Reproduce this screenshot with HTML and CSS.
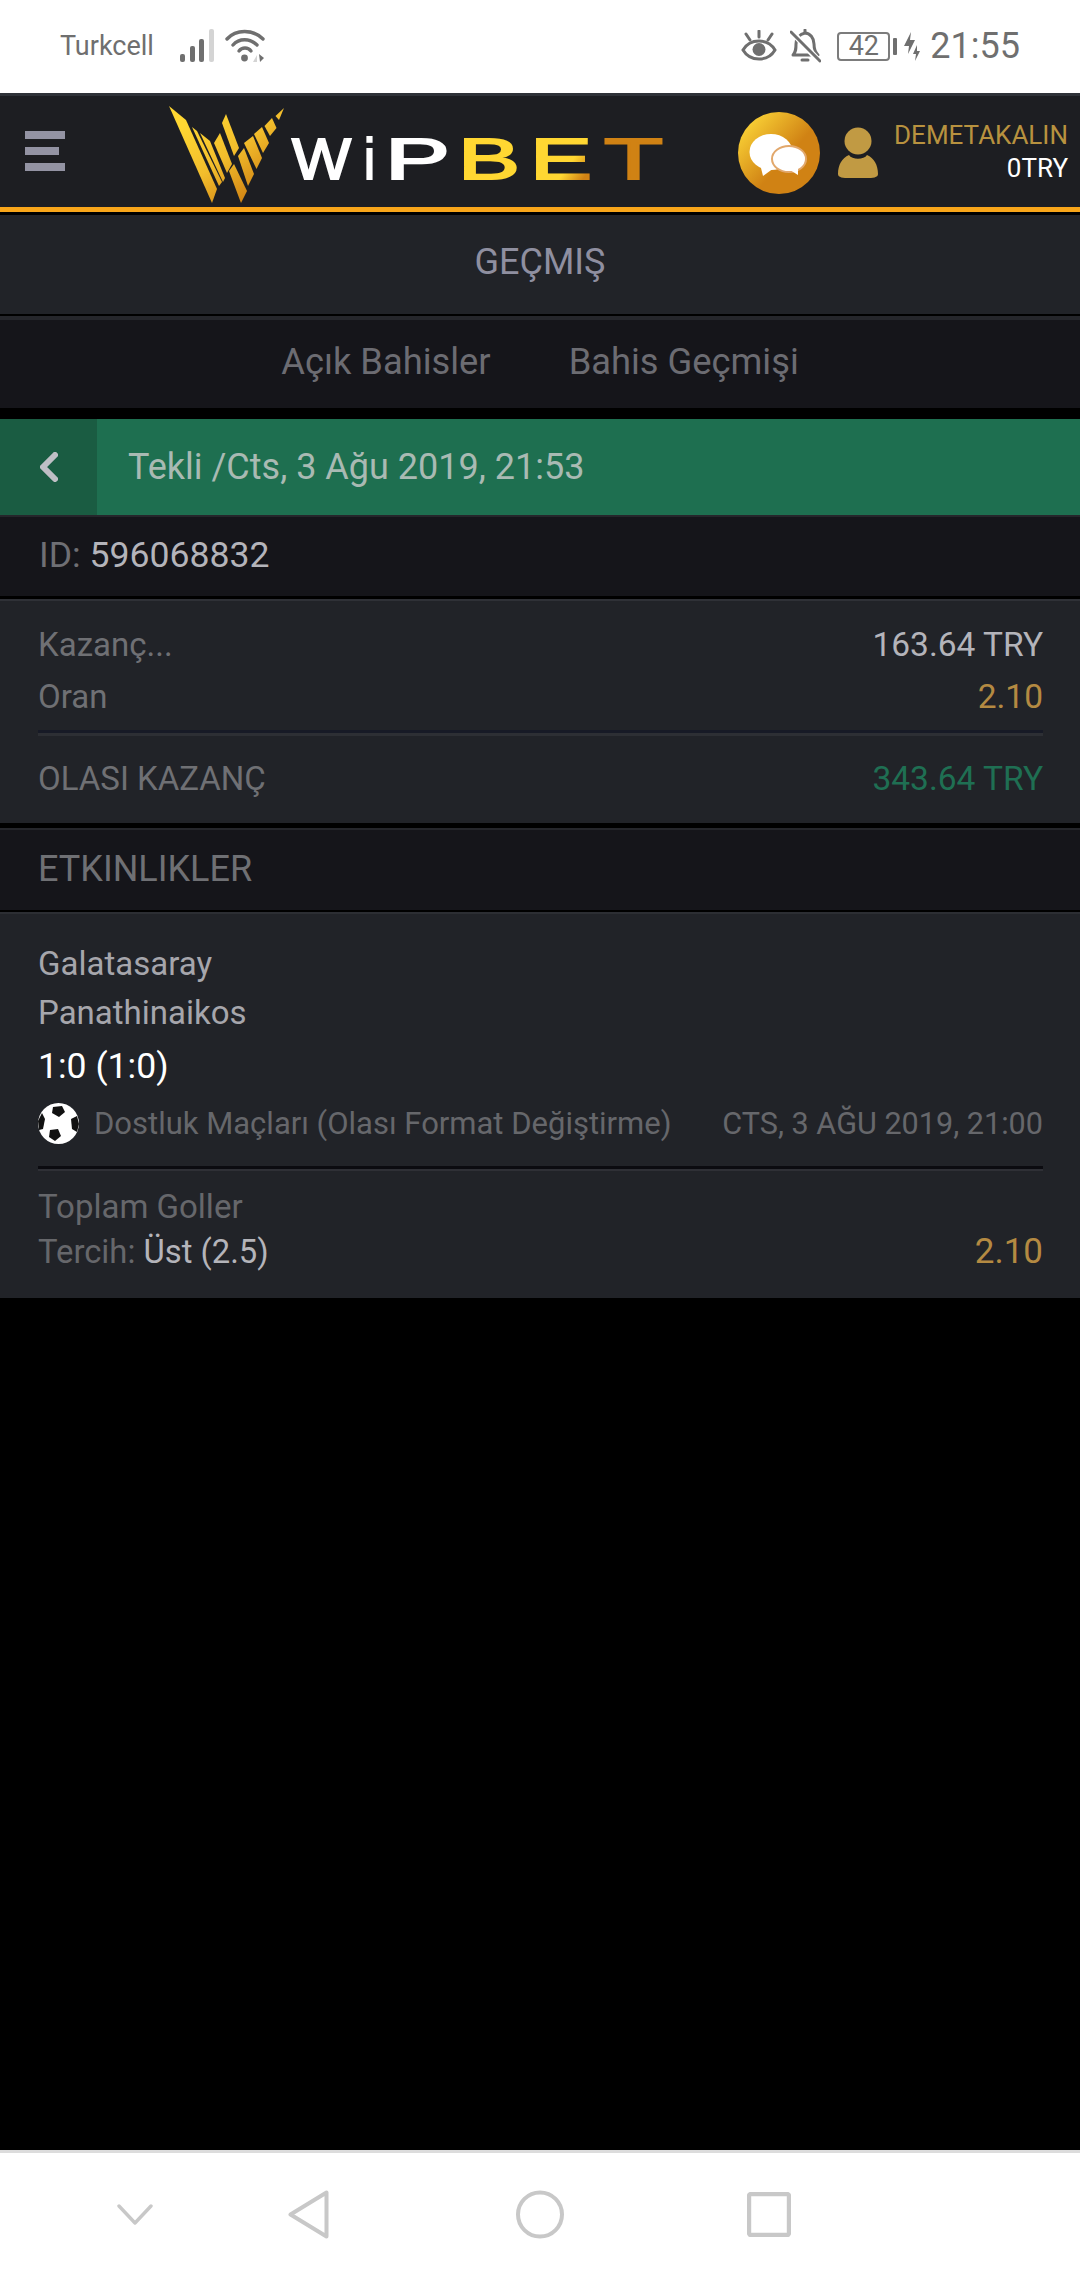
FILE: index.html
```html
<!DOCTYPE html>
<html lang="tr">
  <head>
    <meta charset="UTF-8" />
    <meta name="viewport" content="width=device-width, initial-scale=1.0" />
    <title>Geçmiş</title>
    <link rel="stylesheet" href="styles.css">
  </head>
  <body>
    <div class="phone">
      <div class="status-bar">
        <span class="carrier">Turkcell</span>
        <svg class="signal-icon" width="35" height="34" viewBox="0 0 35 34">
          <rect x="0" y="25" width="5" height="8" rx="2" fill="#6f6f6f" />
          <rect x="10" y="17" width="5" height="16" rx="2" fill="#6f6f6f" />
          <rect x="19" y="10" width="5" height="23" rx="2" fill="#6f6f6f" />
          <rect x="29" y="0" width="5" height="33" rx="2" fill="#d4d4d4" />
        </svg>
        <svg class="wifi-icon" width="40" height="34" viewBox="0 0 40 34">
          <path d="M2 10 C11 0 28 0 38 10" fill="none" stroke="#6f6f6f" stroke-width="3.4" stroke-linecap="round" />
          <path d="M8 16 C14 9 25 9 32 16" fill="none" stroke="#6f6f6f" stroke-width="3.4" stroke-linecap="round" />
          <path d="M14 22 C17 18 23 18 26 22" fill="none" stroke="#6f6f6f" stroke-width="3.4" stroke-linecap="round" />
          <circle cx="19.5" cy="29" r="3.4" fill="#6f6f6f" />
          <path d="M28 33 L32 26 L32 33 Z" fill="#d4d4d4" />
          <path d="M34 25 L39 29 L35 33 Z" fill="#6f6f6f" />
        </svg>
        <div class="status-right">
          <svg class="eye-icon" width="36" height="32" viewBox="0 0 36 32">
            <path d="M2 20 C9 8 27 8 34 20 C27 32 9 32 2 20 Z" fill="none" stroke="#6f6f6f" stroke-width="3" />
            <circle cx="18" cy="19.5" r="6.5" fill="#6f6f6f" />
            <path d="M18 1 V7 M5 4 L9 10 M31 4 L27 10" fill="none" stroke="#6f6f6f" stroke-width="3" stroke-linecap="round" />
          </svg>
          <svg class="bell-icon" width="31" height="34" viewBox="0 0 31 34">
            <path d="M3 26 C6 23 6 20 6 15 C6 9 10 5 15 4 C20 4 24 9 24 15 C24 20 25 23 28 26 Z" fill="none" stroke="#6f6f6f" stroke-width="3" stroke-linejoin="round" />
            <path d="M12 31 H18 M15 1 V3" stroke="#6f6f6f" stroke-width="3" stroke-linecap="round" />
            <path d="M1 2 L30 33" stroke="#fff" stroke-width="6" />
            <path d="M1 3 L30 32" stroke="#6f6f6f" stroke-width="3" stroke-linecap="round" />
          </svg>
          <span class="battery">42</span>
          <span class="battery-tip"></span>
          <svg class="charge-icon" width="17" height="29" viewBox="0 0 17 29">
            <path d="M7 0 L0 14 H5 L4 22 L11 8 H6 Z M13 13 L9 22 H12 L11 29 L16 19 H13 Z" fill="#6f6f6f" />
          </svg>
          <span class="clock">21:55</span>
        </div>
      </div>

      <header class="top-bar">
        <div class="menu-button">
          <span class="menu-line"></span>
          <span class="menu-line short"></span>
          <span class="menu-line"></span>
        </div>
        <svg class="logo" width="500" height="100" viewBox="165 103 500 100">
          <defs>
            <linearGradient id="markGold" gradientUnits="userSpaceOnUse" x1="190" y1="120" x2="250" y2="200">
              <stop offset="0" stop-color="#ffd732" />
              <stop offset="0.5" stop-color="#f2bd2c" />
              <stop offset="1" stop-color="#cf8112" />
            </linearGradient>
            <linearGradient id="etGold" gradientUnits="userSpaceOnUse" x1="545" y1="145" x2="590" y2="178">
              <stop offset="0" stop-color="#ffd732" />
              <stop offset="0.55" stop-color="#ffd732" />
              <stop offset="0.9" stop-color="#d08214" />
            </linearGradient>
          </defs>
          <g fill="url(#markGold)">
            <polygon points="169,105 186,119 217,188 212,202" />
            <polygon points="192,126 197,130 222,181 219,185" />
            <polygon points="200,132 210,140 225,177 223,181" />
            <polygon points="214,142 220,132 232,163 227,172" />
            <polygon points="222,122 226,113 239,147 234,155" />
            <polygon points="229,170 234,163 247,190 241,202" />
            <polygon points="238,155 244,147 254,173 248,185" />
            <polygon points="244,142 253,135 262,157 256.5,168" />
            <polygon points="254,133 262,126 269,142 263,152" />
            <polygon points="264.5,125 272,117 276.5,127 270,135" />
            <polygon points="275.5,115 284,107 279,119" />
          </g>
          <g class="logo-text">
            <text x="292" y="178" textLength="59" lengthAdjust="spacingAndGlyphs" fill="#fff" stroke="#fff">W</text>
            <text x="364" y="178" textLength="11" lengthAdjust="spacingAndGlyphs" fill="#fff" stroke="#fff">i</text>
            <text x="385" y="178" textLength="65" lengthAdjust="spacingAndGlyphs" fill="#fff" stroke="#fff">P</text>
            <text x="458" y="178" textLength="62" lengthAdjust="spacingAndGlyphs" fill="#ffd732" stroke="#ffd732">B</text>
            <text x="530" y="178" textLength="62" lengthAdjust="spacingAndGlyphs" fill="url(#etGold)" stroke="url(#etGold)">E</text>
            <text x="604" y="178" textLength="59" lengthAdjust="spacingAndGlyphs" fill="#d08214" stroke="#d08214">T</text>
          </g>
        </svg>
        <svg class="chat-icon" width="82" height="82" viewBox="0 0 82 82">
          <defs>
            <linearGradient id="chatGold" x1="0.05" y1="0.05" x2="0.6" y2="0.55">
              <stop offset="0" stop-color="#ffdc3a" />
              <stop offset="1" stop-color="#d08214" />
            </linearGradient>
          </defs>
          <circle cx="41" cy="41" r="41" fill="url(#chatGold)" />
          <ellipse cx="33" cy="40" rx="21.5" ry="18" fill="#fff" />
          <path d="M22 52 L25 64 L36 56 Z" fill="#fff" />
          <ellipse cx="51" cy="47" rx="17" ry="13" fill="#fff" stroke="#e2a86c" stroke-width="2" />
          <path d="M52 58 L60 63 L60 55 Z" fill="#fff" />
        </svg>
        <svg class="person-icon" width="40" height="52" viewBox="0 0 40 52">
          <circle cx="20" cy="14" r="13.5" fill="#c19a43" />
          <path d="M0 47 C0 38 4 31 11 28 C14 33 26 33 29 28 C36 31 40 38 40 47 C40 52 30 51 20 51 C10 51 0 52 0 47 Z" fill="#c19a43" />
        </svg>
        <div class="user-info">
          <span class="user-name">DEMETAKALIN</span>
          <span class="user-balance">0TRY</span>
        </div>
      </header>
      <div class="accent-line"></div>

      <div class="page-title">GEÇMIŞ</div>

      <nav class="tabs">
        <span>Açık Bahisler</span>
        <span>Bahis Geçmişi</span>
      </nav>

      <div class="bet-bar">
        <span class="back-button">
          <svg width="18" height="30" viewBox="0 0 18 30">
            <path d="M15 3 L3 15 L15 27" fill="none" stroke="#bfbfc5" stroke-width="6" stroke-linecap="round" stroke-linejoin="round" />
          </svg>
        </span>
        <span class="bet-title">Tekli /Cts, 3 Ağu 2019, 21:53</span>
      </div>

      <div class="bet-id">ID: <span class="bet-id-value">596068832</span></div>

      <section class="summary">
        <div class="summary-row">
          <span class="label">Kazanç...</span>
          <span class="value">163.64 TRY</span>
        </div>
        <div class="summary-row">
          <span class="label">Oran</span>
          <span class="value gold">2.10</span>
        </div>
        <div class="divider"></div>
        <div class="summary-row">
          <span class="label">OLASI KAZANÇ</span>
          <span class="value green">343.64 TRY</span>
        </div>
      </section>

      <div class="section-title">ETKINLIKLER</div>

      <section class="event">
        <div class="team">Galatasaray</div>
        <div class="team">Panathinaikos</div>
        <div class="score">1:0 (1:0)</div>
        <div class="league-row">
          <svg class="ball-icon" width="41" height="41" viewBox="0 0 41 41">
            <circle cx="20.5" cy="20.5" r="20.5" fill="#fff" />
            <polygon points="15,4 24,3 27,9 21,14 14,10" fill="#111" />
            <polygon points="0,18 4,10 7,16 5,26 1,27" fill="#111" />
            <polygon points="12,27 20,26 23,33 17,38 11,34" fill="#111" />
            <polygon points="33,16 39,13 41,21 39,29 34,26" fill="#111" />
          </svg>
          <span class="league">Dostluk Maçları (Olası Format Değiştirme)</span>
          <span class="event-date">CTS, 3 AĞU 2019, 21:00</span>
        </div>
        <div class="divider event-divider"></div>
        <div class="market">Toplam Goller</div>
        <div class="pick-row">
          <span class="pick">Tercih: <span class="pick-value">Üst (2.5)</span></span>
          <span class="pick-odds">2.10</span>
        </div>
      </section>

      <div class="spacer"></div>

      <div class="nav-bar">
        <svg class="nav-hide" width="36" height="21" viewBox="0 0 36 21">
          <path d="M2 2 L18 19 L34 2" fill="none" stroke="#c8c8c8" stroke-width="3.4" stroke-linecap="round" stroke-linejoin="round" />
        </svg>
        <svg class="nav-back" width="41" height="49" viewBox="0 0 41 49">
          <path d="M38.5 2.5 V46.5 L2.5 24.5 Z" fill="none" stroke="#c8c8c8" stroke-width="4" stroke-linejoin="round" />
        </svg>
        <svg class="nav-home" width="48" height="49" viewBox="0 0 48 49">
          <circle cx="24" cy="24.5" r="22" fill="none" stroke="#c8c8c8" stroke-width="4" />
        </svg>
        <svg class="nav-recent" width="44" height="45" viewBox="0 0 44 45">
          <rect x="2" y="2" width="40" height="41" rx="2" fill="none" stroke="#c8c8c8" stroke-width="4.4" />
        </svg>
      </div>
    </div>
  </body>
</html>
```

FILE: styles.css
```css
* {
  box-sizing: border-box;
  margin: 0;
  padding: 0;
}

body {
  background: #000;
  font-family: Roboto, sans-serif;
}

.phone {
  display: flex;
  flex-direction: column;
  height: 2280px;
}

/* status bar */
.status-bar {
  display: flex;
  align-items: center;
  height: 93px;
  padding-left: 60px;
  padding-bottom: 1px;
  background: #fff;
  color: #6f6f6f;
}

.carrier {
  font-size: 27px;
}

.signal-icon {
  margin-left: 26px;
}

.wifi-icon {
  margin-left: 10px;
}

.status-right {
  display: flex;
  align-items: center;
  margin-left: auto;
  padding-right: 60px;
}

.eye-icon {
  margin-right: 13px;
}

.bell-icon {
  margin-right: 16px;
}

.battery {
  width: 53px;
  height: 29px;
  border: 2px solid #7c7c7c;
  border-radius: 4px;
  font-size: 27px;
  line-height: 25px;
  text-align: center;
}

.battery-tip {
  width: 4px;
  height: 17px;
  margin: 0 7px 0 3px;
  background: #6f6f6f;
  border-radius: 1px;
}

.charge-icon {
  margin-right: 9px;
}

.clock {
  font-size: 36px;
}

/* header */
.top-bar {
  display: flex;
  align-items: center;
  height: 114px;
  padding-left: 25px;
  padding-right: 12px;
  background: #1d1e22;
  border-top: 3px solid #2f3238;
}

.menu-button {
  display: flex;
  flex-direction: column;
  gap: 8px;
  width: 40px;
  margin-top: -2px;
}

.menu-line {
  height: 8px;
  background: #9393a3;
}

.menu-line.short {
  width: 34px;
}

.logo {
  margin-left: 100px;
  margin-top: 4px;
}

.logo-text text {
  font-family: "Liberation Sans", sans-serif;
  font-size: 58px;
  stroke-width: 2;
}

.chat-icon {
  margin-left: 73px;
  margin-top: 2px;
}

.person-icon {
  margin-left: 18px;
  margin-top: 2px;
}

.user-info {
  display: flex;
  flex-direction: column;
  align-items: flex-end;
  margin-left: auto;
  font-size: 26px;
  line-height: 33px;
}

.user-name {
  color: #b8923f;
}

.user-balance {
  color: #fff;
}

.accent-line {
  height: 5px;
  background: #f9a61a;
  margin-bottom: 3px;
}

/* title and tabs */
.page-title {
  height: 99px;
  background: #212328;
  color: #8f8fa0;
  font-size: 36px;
  line-height: 95px;
  text-align: center;
}

.tabs {
  display: flex;
  justify-content: center;
  gap: 78px;
  height: 92px;
  margin-top: 2px;
  background: #15151a;
  border-top: 4px solid #25262b;
  color: #6c6c72;
  font-size: 36.3px;
  line-height: 84px;
}

/* bet header */
.bet-bar {
  display: flex;
  height: 96px;
  margin-top: 11px;
  background: #1e6f50;
  color: #a9bab3;
  font-size: 36px;
  line-height: 96px;
}

.back-button {
  display: flex;
  align-items: center;
  justify-content: center;
  width: 97px;
  background: #1a5c42;
}

.bet-title {
  margin-left: 31px;
}

.bet-id {
  height: 81px;
  padding-left: 39px;
  background: #15151a;
  border-top: 2px solid #25262b;
  color: #6f6f74;
  font-size: 35.6px;
  line-height: 77px;
}

.bet-id-value {
  color: #b4b4ba;
}

/* summary */
.summary {
  height: 224px;
  margin-top: 3px;
  padding: 17px 37px 0 38px;
  background: #212328;
  border-top: 2px solid #2f3137;
}

.summary-row {
  display: flex;
  justify-content: space-between;
  align-items: baseline;
  height: 52px;
  line-height: 53px;
}

.label {
  color: #6f7074;
  font-size: 33px;
}

.value {
  color: #b4b4ba;
  font-size: 33.5px;
}

.value.gold {
  color: #b48a42;
}

.value.green {
  color: #1f6f53;
}

.divider {
  height: 6px;
  margin: 8px 0 16px 0;
  background: linear-gradient(#171a26 50%, #2d2f34 50%);
}

.section-title {
  height: 82px;
  margin-top: 5px;
  padding-left: 38px;
  background: #15151a;
  border-top: 2px solid #25262b;
  color: #6f7074;
  font-size: 36px;
  line-height: 79px;
}

/* event */
.event {
  height: 386px;
  margin-top: 2px;
  padding: 25px 37px 0 38px;
  background: #212328;
  border-top: 2px solid #2c2e33;
}

.team {
  height: 49px;
  color: #a6a6ac;
  font-size: 33px;
  line-height: 50px;
}

.score {
  height: 50px;
  margin-top: 4px;
  color: #fff;
  font-size: 35.6px;
  line-height: 50px;
}

.league-row {
  display: flex;
  align-items: center;
  height: 41px;
  margin-top: 12px;
  color: #66676b;
  font-size: 31px;
  line-height: 41px;
}

.league {
  margin-left: 15px;
}

.event-date {
  margin-left: auto;
  font-size: 30.6px;
}

.event-divider {
  height: 5px;
  margin: 22px 0 13px 0;
  background: linear-gradient(#0b0b10 60%, #2f3036 60%);
}

.market {
  height: 44px;
  color: #66676b;
  font-size: 33px;
  line-height: 46px;
}

.pick-row {
  display: flex;
  justify-content: space-between;
  align-items: baseline;
  height: 46px;
  line-height: 47px;
}

.pick {
  color: #66676b;
  font-size: 32.8px;
}

.pick-value {
  color: #b4b4ba;
}

.pick-odds {
  color: #b48a42;
  font-size: 35px;
}

.spacer {
  flex: 1;
}

/* navigation bar */
.nav-bar {
  display: flex;
  align-items: center;
  height: 130px;
  padding-left: 117px;
  padding-bottom: 4px;
  background: #fff;
  border-top: 3px solid #dcdcdc;
}

.nav-back {
  margin-left: 135px;
}

.nav-home {
  margin-left: 187px;
}

.nav-recent {
  margin-left: 183px;
}
```
